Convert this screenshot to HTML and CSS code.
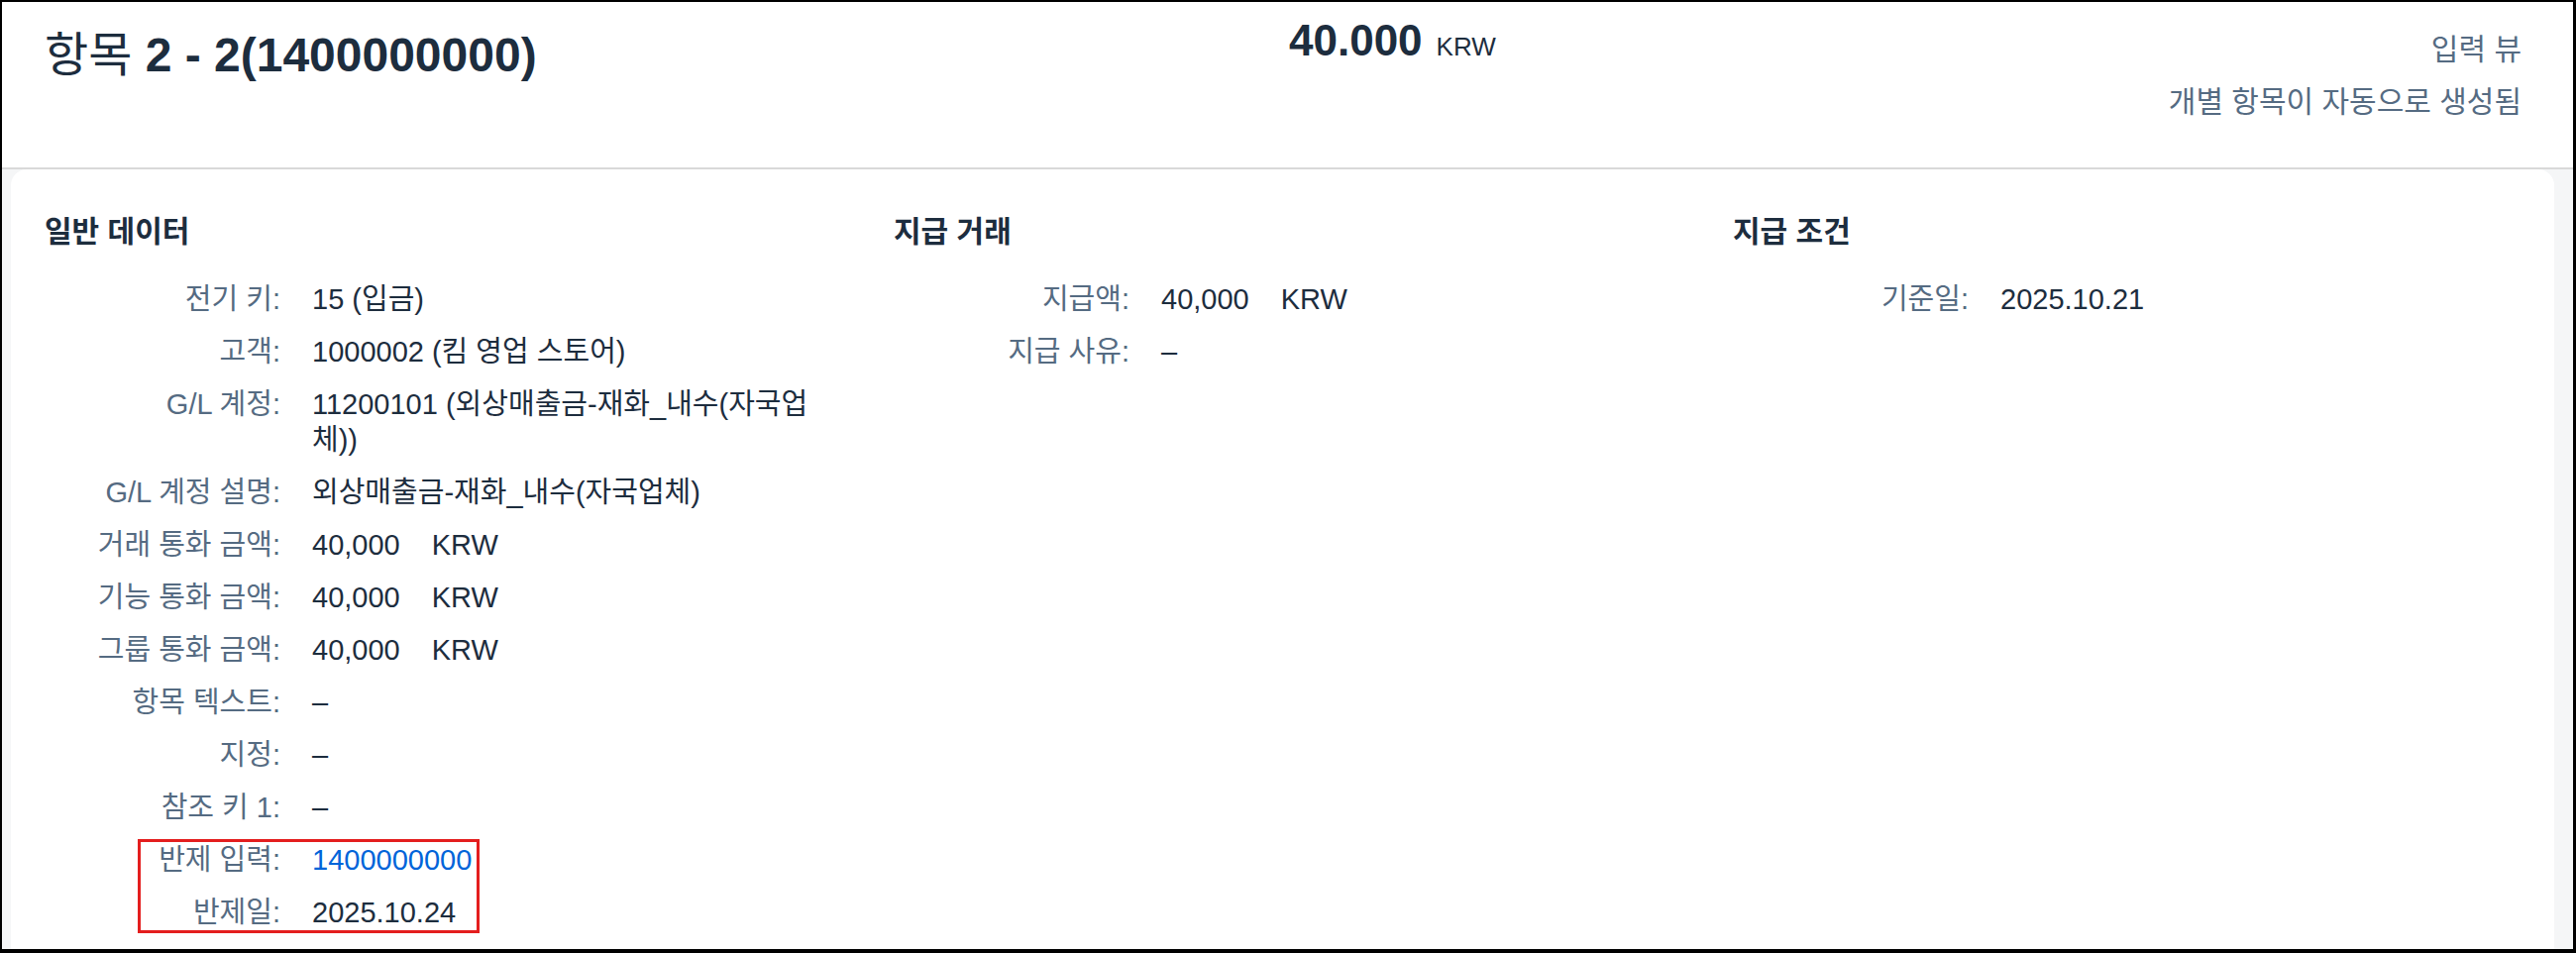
FILE: index.html
```html
<!DOCTYPE html>
<html lang="ko">
<head>
<meta charset="utf-8">
<title>항목 2 - 2(1400000000)</title>
<link rel="stylesheet" href="styles.css">
</head>
<body>
<div class="frame">
  <header class="hdr">
    <h1 class="title">항목 <b>2 - 2(1400000000)</b></h1>
    <div class="amount"><span class="num">40.000</span><span class="cur">KRW</span></div>
    <div class="meta">
      <div class="meta-line">입력 뷰</div>
      <div class="meta-line">개별 항목이 자동으로 생성됨</div>
    </div>
  </header>
  <main class="content">
    <section class="card">
      <div class="cols">
        <div class="col">
          <h2 class="sec">일반 데이터</h2>
          <div class="form">
            <div class="row"><span class="lbl">전기 키:</span><span class="val">15 (입금)</span></div>
            <div class="row"><span class="lbl">고객:</span><span class="val">1000002 (킴 영업 스토어)</span></div>
            <div class="row"><span class="lbl">G/L 계정:</span><span class="val">11200101 (외상매출금-재화_내수(자국업체))</span></div>
            <div class="row"><span class="lbl">G/L 계정 설명:</span><span class="val">외상매출금-재화_내수(자국업체)</span></div>
            <div class="row"><span class="lbl">거래 통화 금액:</span><span class="val"><span class="amt">40,000</span><span class="unit">KRW</span></span></div>
            <div class="row"><span class="lbl">기능 통화 금액:</span><span class="val"><span class="amt">40,000</span><span class="unit">KRW</span></span></div>
            <div class="row"><span class="lbl">그룹 통화 금액:</span><span class="val"><span class="amt">40,000</span><span class="unit">KRW</span></span></div>
            <div class="row"><span class="lbl">항목 텍스트:</span><span class="val">–</span></div>
            <div class="row"><span class="lbl">지정:</span><span class="val">–</span></div>
            <div class="row"><span class="lbl">참조 키 1:</span><span class="val">–</span></div>
            <div class="group marked">
              <div class="row"><span class="lbl">반제 입력:</span><span class="val"><a class="link" href="#">1400000000</a></span></div>
              <div class="row"><span class="lbl">반제일:</span><span class="val">2025.10.24</span></div>
            </div>
          </div>
        </div>
        <div class="col">
          <h2 class="sec">지급 거래</h2>
          <div class="form">
            <div class="row"><span class="lbl">지급액:</span><span class="val"><span class="amt">40,000</span><span class="unit">KRW</span></span></div>
            <div class="row"><span class="lbl">지급 사유:</span><span class="val">–</span></div>
          </div>
        </div>
        <div class="col">
          <h2 class="sec">지급 조건</h2>
          <div class="form">
            <div class="row"><span class="lbl">기준일:</span><span class="val">2025.10.21</span></div>
          </div>
        </div>
      </div>
    </section>
  </main>
</div>
</body>
</html>
```
FILE: styles.css
```css
html, body {
  margin: 0;
  padding: 0;
}
body {
  background: #000;
  font-family: "Liberation Sans", "Noto Sans CJK KR", sans-serif;
  color: #1d2d3e;
}
.frame {
  margin: 2px 3px 4px 2px;
  height: 956px;
  background: #f5f6f7;
  display: flex;
  flex-direction: column;
  overflow: hidden;
}
.hdr {
  flex: 0 0 auto;
  height: 167px;
  background: #fff;
  border-bottom: 2px solid #d9d9d9;
  display: grid;
  grid-template-columns: 1256px auto 1fr;
  align-items: start;
  padding: 0 52px 0 43px;
}
.title {
  margin: 0;
  padding-top: 24px;
  font-size: 48px;
  line-height: 60px;
  font-weight: 400;
  color: #1d2d3e;
  white-space: nowrap;
}
.title b {
  font-weight: 700;
}
.amount {
  padding-top: 13px;
  line-height: 52px;
  white-space: nowrap;
  color: #1d2d3e;
}
.amount .num {
  font-size: 44px;
  font-weight: 700;
}
.amount .cur {
  font-size: 26px;
  margin-left: 14px;
}
.meta {
  padding-top: 30px;
  text-align: right;
  color: #556b82;
  font-size: 30px;
  line-height: 36px;
  display: flex;
  flex-direction: column;
  gap: 17px;
}
.content {
  flex: 1 1 auto;
  padding: 0 19px 0 9px;
  display: flex;
}
.card {
  flex: 1 1 auto;
  background: #fff;
  border-radius: 16px 16px 0 0;
  padding: 45px 0 0 34px;
}
.cols {
  display: grid;
  grid-template-columns: 857px 847px 1fr;
}
.col {
  padding-right: 50px;
}
.sec {
  margin: 0 0 32px 0;
  font-size: 30px;
  line-height: 36px;
  font-weight: 700;
  color: #1d2d3e;
}
.form {
  display: flex;
  flex-direction: column;
  gap: 17px;
}
.group {
  display: flex;
  flex-direction: column;
  gap: 17px;
  position: relative;
}
.marked::after {
  content: "";
  position: absolute;
  left: 94px;
  top: -3px;
  width: 345px;
  bottom: -3px;
  border: 3px solid #e41e1e;
  box-sizing: border-box;
  pointer-events: none;
}
.row {
  display: grid;
  grid-template-columns: 238px 1fr;
  column-gap: 32px;
  font-size: 29px;
  line-height: 36px;
}
.lbl {
  text-align: right;
  color: #556b82;
  white-space: nowrap;
}
.val {
  color: #1d2d3e;
}
.unit {
  margin-left: 32px;
}
.link {
  color: #0064d9;
  text-decoration: none;
}
```
